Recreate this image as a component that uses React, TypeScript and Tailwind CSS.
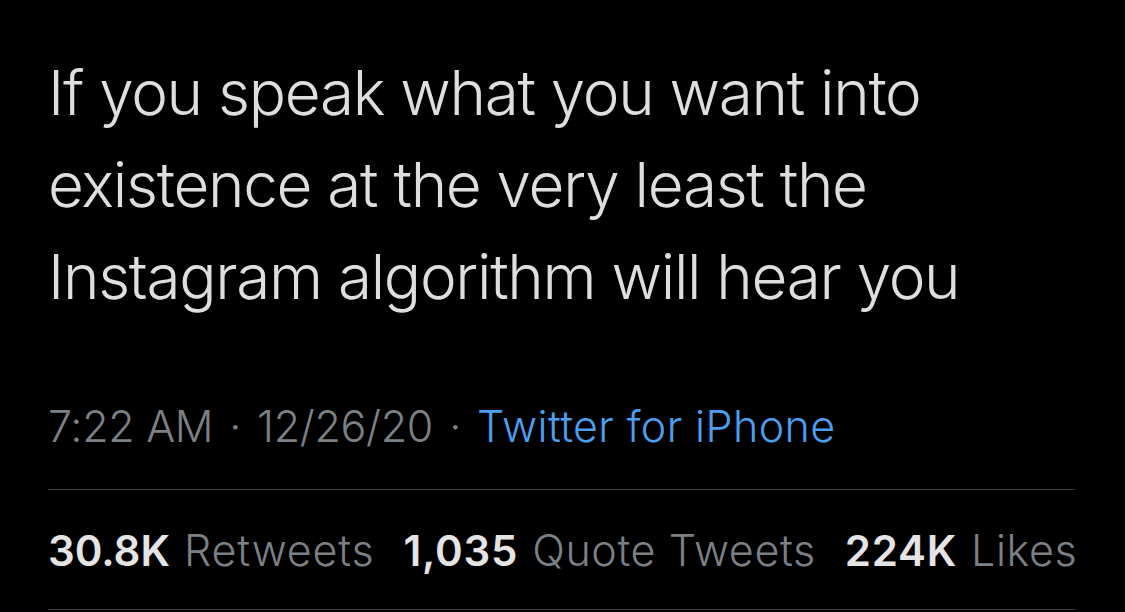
export default function App() {
  return (
    <div className="h-[612px] w-[1125px] overflow-hidden bg-black font-['Inter',sans-serif]">
      <div className="pl-[48px] pr-[50px] pt-[47px]">
        <p className="text-[62px] font-light leading-[92px] tracking-[-1.3px] text-[#dedede]">
          If you speak what you want into
          <br />
          existence at the very least the
          <br />
          Instagram algorithm will hear you
        </p>
        <div className="mt-[77px] flex items-center whitespace-nowrap text-[43px] font-light leading-[52px] tracking-[-0.3px] text-[#7b8085]">
          <span>7:22 AM</span>
          <span className="px-[16px]">·</span>
          <span>12/26/20</span>
          <span className="px-[16px]">·</span>
          <span className="tracking-[0.4px] text-[#4a9ff0]">Twitter for iPhone</span>
        </div>
        <div className="mt-[37px] border-t border-[#38383a]" />
        <div className="flex items-center gap-[29px] whitespace-nowrap pt-[34px] pb-[32px] text-[42px] leading-[52px]">
          <div className="flex items-baseline gap-[14px]">
            <span className="font-semibold text-[#e4e4e4]">30.8K</span>
            <span className="text-[43px] font-light tracking-[0.8px] text-[#7b8085]">Retweets</span>
          </div>
          <div className="flex items-baseline gap-[14px]">
            <span className="font-semibold tracking-[0.8px] text-[#e4e4e4]">1,035</span>
            <span className="text-[43px] font-light tracking-[0.6px] text-[#7b8085]">Quote Tweets</span>
          </div>
          <div className="flex items-baseline gap-[14px]">
            <span className="font-semibold tracking-[0.8px] text-[#e4e4e4]">224K</span>
            <span className="text-[43px] font-light tracking-[0.6px] text-[#7b8085]">Likes</span>
          </div>
        </div>
        <div className="border-t border-[#38383a]" />
      </div>
    </div>
  );
}
